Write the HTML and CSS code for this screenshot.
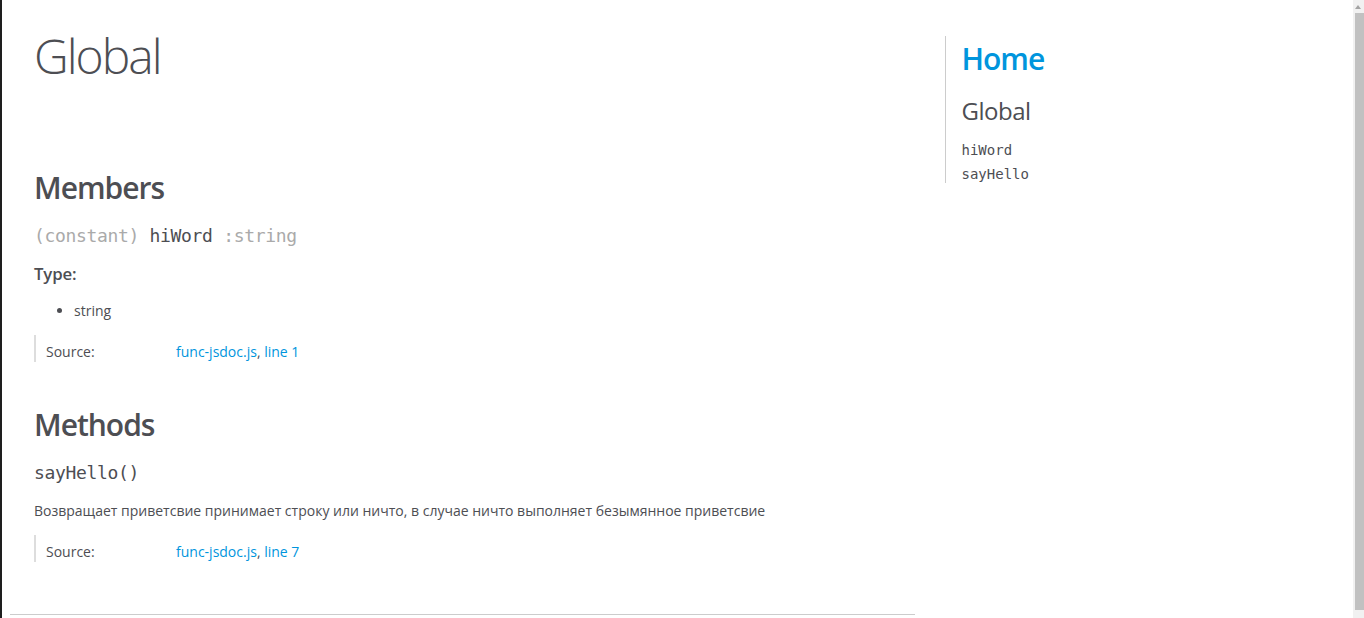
FILE: index.html
```html
<!DOCTYPE html>
<html lang="en">
<head>
<meta charset="utf-8">
<title>JSDoc: Global</title>
<link rel="stylesheet" href="styles.css">
</head>
<body>
<div class="page">
  <div class="main">
    <h1 class="page-title">Global</h1>
    <section class="doc-section">
      <header class="doc-header"></header>
      <article class="doc-article">
        <h3 class="subsection-title">Members</h3>
        <h4 class="name"><span class="type-signature">(constant) </span>hiWord<span class="type-signature"> :string</span></h4>
        <h5 class="type-label">Type:</h5>
        <ul class="type-list">
          <li><span class="param-type">string</span></li>
        </ul>
        <dl class="details">
          <dt class="tag-source">Source:</dt>
          <dd class="tag-source">
            <ul class="dummy"><li><a class="link" href="#">func-jsdoc.js</a>, <a class="link" href="#">line 1</a></li></ul>
          </dd>
        </dl>

        <h3 class="subsection-title">Methods</h3>
        <h4 class="name">sayHello<span class="signature">()</span></h4>
        <div class="description">Возвращает приветсвие принимает строку или ничто, в случае ничто выполняет безымянное приветсвие</div>
        <dl class="details">
          <dt class="tag-source">Source:</dt>
          <dd class="tag-source">
            <ul class="dummy"><li><a class="link" href="#">func-jsdoc.js</a>, <a class="link" href="#">line 7</a></li></ul>
          </dd>
        </dl>
      </article>
    </section>
  </div>
  <nav class="nav">
    <h2 class="nav-home"><a class="home-link" href="#">Home</a></h2>
    <h3 class="nav-title">Global</h3>
    <ul class="nav-list">
      <li class="nav-item"><a class="nav-link" href="#">hiWord</a></li>
      <li class="nav-item"><a class="nav-link" href="#">sayHello</a></li>
    </ul>
  </nav>
  <div class="clear"></div>
</div>
<div class="fake-scrollbar" aria-hidden="true">
  <div class="scroll-arrow"></div>
  <div class="scroll-thumb"></div>
</div>
</body>
</html>
```

FILE: styles.css
```css
html {
  background-color: #fff;
  font-size: 14px;
  border-left: 2px solid #1e1e1e;
}

body {
  margin: 8px 19px 8px 8px;
  font-family: "Open Sans", sans-serif;
  line-height: 1.5;
  color: #4d4e53;
  background-color: #fff;
}

.link, .home-link {
  color: #0095dd;
  text-decoration: none;
}

.main {
  float: left;
  width: 70%;
}

.page-title {
  font-family: "Open Sans", sans-serif;
  font-weight: 300;
  font-size: 48px;
  letter-spacing: -2px;
  margin: 12px 24px 20px;
}

.doc-section {
  display: block;
  background-color: #fff;
  padding: 12px 24px;
  border-bottom: 1px solid #ccc;
  margin-right: 30px;
}

.doc-header {
  height: 41px;
}

.subsection-title {
  font-size: 30px;
  font-weight: 600;
  letter-spacing: -1px;
  margin: 0 0 12px;
}

.name {
  font-family: "DejaVu Sans Mono", monospace;
  font-size: 18px;
  font-weight: 400;
  letter-spacing: -0.33px;
  margin: 0 0 12px;
  color: #4d4e53;
}

.signature {
  font-family: "DejaVu Sans Mono", monospace;
}

.type-signature {
  color: #aaa;
}

.type-label {
  font-size: 120%;
  font-weight: 600;
  letter-spacing: -0.01em;
  margin: 8px 0 3px 0;
}

.type-list {
  margin: 14px 0;
  padding-left: 40px;
}

.details {
  margin: 14px 0 40px;
  border-left: 2px solid #ddd;
}

.details::after {
  content: "";
  display: block;
  clear: both;
}

.details dt {
  width: 120px;
  float: left;
  padding-left: 10px;
  padding-top: 6px;
}

.details dd {
  margin-left: 70px;
}

.dummy {
  margin: 0;
  padding-left: 40px;
  list-style-type: none;
}

.dummy li {
  margin-left: 30px;
  padding-top: 6px;
}

.description {
  margin: 14px 0;
}

.nav {
  display: block;
  float: right;
  margin-top: 28px;
  width: 30%;
  box-sizing: border-box;
  border-left: 1px solid #ccc;
  padding-left: 16px;
}

.nav-home {
  font-size: 30px;
  font-weight: 600;
  letter-spacing: -1px;
  margin: 0 0 12px;
}

.nav-title {
  font-size: 24px;
  font-weight: 400;
  letter-spacing: -0.5px;
  margin: 12px 0 12px;
}

.nav-list {
  font-family: "Liberation Sans", Arial, sans-serif;
  font-size: 100%;
  line-height: 17px;
  padding: 0;
  margin: 0;
  list-style-type: none;
}

.nav-item {
  margin-top: 6px;
}

.nav-link {
  font-family: "DejaVu Sans Mono", monospace;
  line-height: 18px;
  color: #4d4e53;
  text-decoration: none;
}

.clear {
  clear: both;
}

.fake-scrollbar {
  position: fixed;
  top: 0;
  right: 0;
  bottom: 0;
  width: 11px;
  background: #f1f1f1;
}

.scroll-arrow {
  position: absolute;
  top: 5px;
  left: 2px;
  width: 0;
  height: 0;
  border-left: 3.5px solid transparent;
  border-right: 3.5px solid transparent;
  border-bottom: 4px solid #a3a3a3;
}

.scroll-thumb {
  position: absolute;
  top: 13px;
  bottom: 8px;
  left: 2px;
  right: 0;
  background: #c1c1c1;
}
```
